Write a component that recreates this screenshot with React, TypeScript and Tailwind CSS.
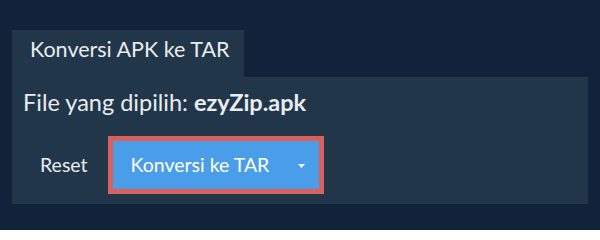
export default function App() {
  return (
    <div className="w-[600px] h-[230px] bg-[#10233a] px-3 pt-[30px] font-['Lato','Noto_Sans',sans-serif] text-[#e8edf2]">
      <div className="flex">
        <div className="h-[47px] w-[232px] bg-[#213649] pl-[18px] pb-[8px] flex items-center text-[21.5px]">
          Konversi APK ke TAR
        </div>
      </div>
      <div className="h-[127px] bg-[#213649] pl-[11px] pt-[9px]">
        <p className="text-[23.5px] leading-[32px]">
          File yang dipilih: <span className="font-bold">ezyZip.apk</span>
        </p>
        <div className="mt-[18px] flex items-center">
          <button className="h-[48px] px-[17px] text-[19.5px] text-[#e8edf2]">Reset</button>
          <div className="ml-[3px] border-[5px] border-[#d9605b]">
            <button className="h-[48px] w-[206px] bg-[#4a9de9] pl-[18px] pr-[14px] flex items-center justify-between text-[19.5px] text-white">
              <span>Konversi ke TAR</span>
              <svg width="7" height="4" viewBox="0 0 7 4" className="mt-[1px]">
                <path d="M0 0h7L3.5 4z" fill="white" />
              </svg>
            </button>
          </div>
        </div>
      </div>
    </div>
  )
}
